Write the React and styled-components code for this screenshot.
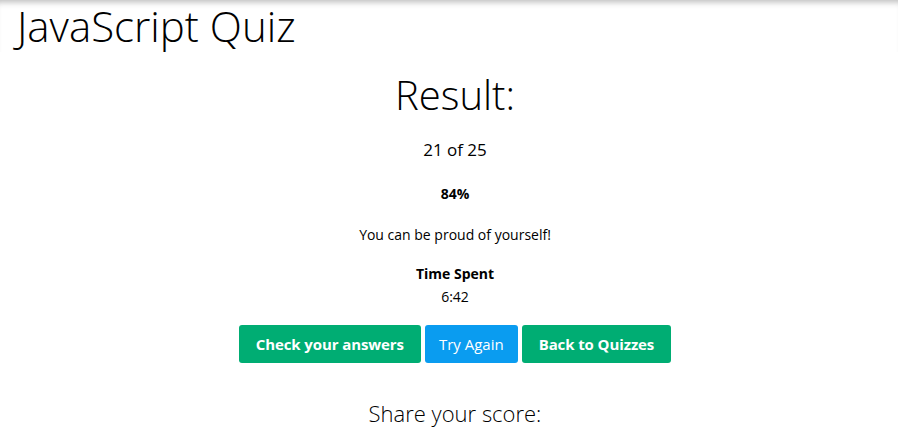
import React from "react"
import styled, { createGlobalStyle } from "styled-components"

const GlobalStyle = createGlobalStyle`
  body {
    margin: 0;
    font-family: "Open Sans", "Noto Sans", sans-serif;
    color: #000;
    background: #fff;
  }
`

const Header = styled.header`
  box-shadow: inset 0 7px 6px -5px rgba(0, 0, 0, 0.28);
`

const Title = styled.h1`
  margin: 0;
  padding: 0 17px;
  font-size: 42px;
  font-weight: 300;
  line-height: 52px;
`

const Result = styled.main`
  display: flex;
  flex-direction: column;
  align-items: center;
  padding-left: 12px;
`

const Heading = styled.h2`
  margin: 18px 0 0;
  font-size: 40px;
  font-weight: 300;
  line-height: 50px;
`

const Score = styled.p`
  margin: 18px 0 0;
  font-size: 17px;
  font-weight: 400;
  line-height: 24px;
`

const Text = styled.p`
  margin: ${p => p.$top}px 0 0;
  font-size: 14px;
  font-weight: ${p => (p.$bold ? 700 : 400)};
  line-height: 20px;
`

const Actions = styled.div`
  display: flex;
  gap: 4px;
  margin-top: 18px;
`

const Button = styled.button`
  height: 38px;
  padding: 0 ${p => (p.$primary ? 14 : 17)}px;
  border: none;
  border-radius: 3px;
  background: ${p => (p.$primary ? "#0a9cf0" : "#00ad73")};
  color: #fff;
  font-family: inherit;
  font-size: 15px;
  font-weight: ${p => (p.$primary ? 400 : 700)};
  letter-spacing: ${p => (p.$primary ? 0 : -0.1)}px;
  cursor: pointer;
`

const Share = styled.h3`
  margin: 35px 0 0;
  font-size: 22px;
  font-weight: 300;
  line-height: 30px;
`

export default function App() {
  return (
    <>
      <GlobalStyle />
      <Header>
        <Title>JavaScript Quiz</Title>
      </Header>
      <Result>
        <Heading>Result:</Heading>
        <Score>21 of 25</Score>
        <Text $bold $top={22}>84%</Text>
        <Text $top={21}>You can be proud of yourself!</Text>
        <Text $bold $top={19}>Time Spent</Text>
        <Text $top={3}>6:42</Text>
        <Actions>
          <Button>Check your answers</Button>
          <Button $primary>Try Again</Button>
          <Button>Back to Quizzes</Button>
        </Actions>
        <Share>Share your score:</Share>
      </Result>
    </>
  )
}
